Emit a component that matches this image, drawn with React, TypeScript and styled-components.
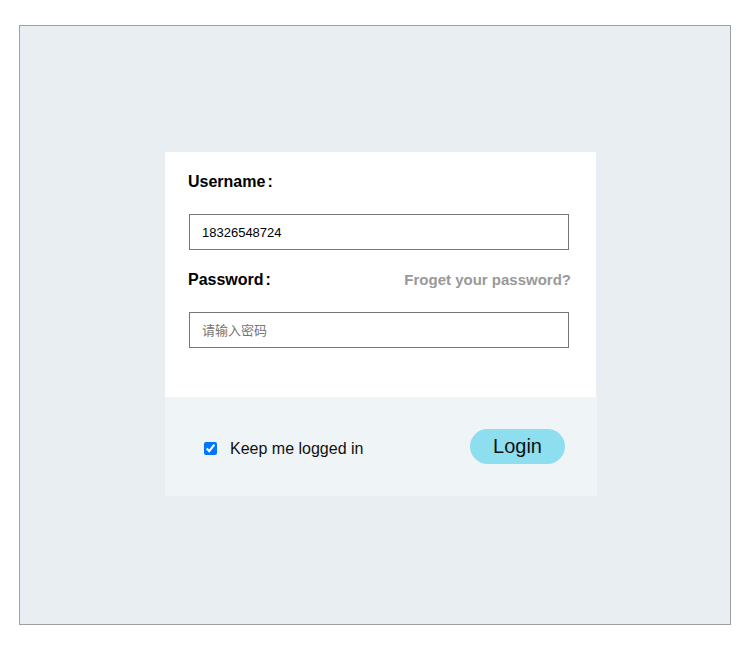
import React from 'react';
import styled, { createGlobalStyle } from 'styled-components';

const GlobalStyle = createGlobalStyle`
  html, body {
    margin: 0;
    padding: 0;
    background: #ffffff;
    font-family: "Liberation Sans", Arial, "Noto Sans CJK SC", sans-serif;
  }
`;

const Frame = styled.div`
  box-sizing: border-box;
  width: 712px;
  height: 600px;
  margin: 25px 0 0 19px;
  padding: 126px 0 0 145px;
  border: 1px solid #a0a0a0;
  background: #e8eef1;
`;

const Card = styled.div`
  width: 432px;
`;

const FormSection = styled.div`
  width: 431px;
  box-sizing: border-box;
  padding: 20px 25px 49px 23px;
  background: #ffffff;
`;

const LabelRow = styled.div`
  display: flex;
  justify-content: space-between;
  align-items: flex-end;
  height: 19px;
  margin-bottom: 23px;
`;

const Label = styled.label`
  font-size: 16px;
  font-weight: bold;
  line-height: 18px;
  color: #000000;
`;

const Colon = styled.span`
  margin-left: 2px;
`;

const ForgotLink = styled.a`
  font-size: 15px;
  font-weight: bold;
  line-height: 18px;
  color: #999999;
  text-decoration: none;
  cursor: pointer;
`;

const Input = styled.input<{ $last?: boolean }>`
  display: block;
  box-sizing: border-box;
  width: 380px;
  height: 36px;
  margin: 0 0 ${p => (p.$last ? '0' : '20px')} 1px;
  padding: 0 12px;
  border: 1px solid #767676;
  border-radius: 0;
  outline: none;
  font-family: "Liberation Sans", Arial, "Noto Sans CJK SC", sans-serif;
  font-size: 13px;
  color: #000000;

  &::placeholder {
    color: #757575;
    font-family: "Noto Sans CJK SC", sans-serif;
  }
`;

const Footer = styled.div`
  display: flex;
  justify-content: space-between;
  align-items: center;
  box-sizing: border-box;
  height: 99px;
  padding: 0 32px 0 35px;
  background: #eff4f7;
`;

const Remember = styled.label`
  display: flex;
  align-items: center;
  margin-top: 4px;
  font-size: 16px;
  line-height: 18px;
  color: #111111;
`;

const Checkbox = styled.input`
  width: 13px;
  height: 13px;
  margin: 0 13px 0 4px;
`;

const LoginButton = styled.button`
  width: 95px;
  height: 35px;
  padding: 0;
  border: none;
  border-radius: 18px;
  background: #8ddff0;
  font-family: "Liberation Sans", Arial, sans-serif;
  font-size: 20px;
  color: #111111;
  cursor: pointer;
`;

const App: React.FC = () => {
  return (
    <>
      <GlobalStyle />
      <Frame>
        <Card>
          <FormSection>
            <LabelRow>
              <Label htmlFor="username">
                Username<Colon>:</Colon>
              </Label>
            </LabelRow>
            <Input id="username" type="text" defaultValue="18326548724" />
            <LabelRow>
              <Label htmlFor="password">
                Password<Colon>:</Colon>
              </Label>
              <ForgotLink>Froget your password?</ForgotLink>
            </LabelRow>
            <Input id="password" type="password" placeholder="请输入密码" $last />
          </FormSection>
          <Footer>
            <Remember>
              <Checkbox type="checkbox" defaultChecked />
              Keep me logged in
            </Remember>
            <LoginButton>Login</LoginButton>
          </Footer>
        </Card>
      </Frame>
    </>
  );
};

export default App;
